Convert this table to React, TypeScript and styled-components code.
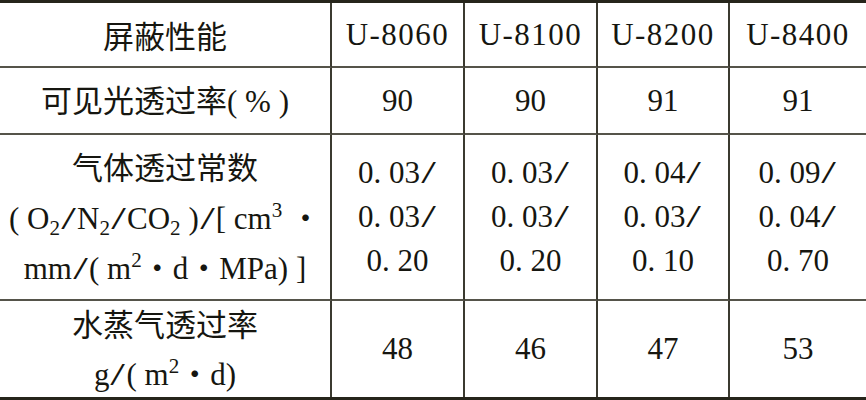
import React from 'react';
import styled, { createGlobalStyle } from 'styled-components';

const GlobalStyle = createGlobalStyle`
  html, body {
    margin: 0;
    padding: 0;
    background: #ffffff;
  }
`;

const serif = `'Liberation Serif', 'Times New Roman', 'DejaVu Serif', 'Noto Sans CJK SC', serif`;

const Table = styled.div`
  width: 866px;
  display: grid;
  grid-template-columns: 332px 133px 133px 132px 1fr;
  grid-template-rows: 65px 67px 166px 96px;
  border-top: 3px solid #26251b;
  border-bottom: 3px solid #26251b;
  background: #fff;
  color: #161610;
  font-family: ${serif};
`;

const Cell = styled.div<{ $lastCol?: boolean; $lastRow?: boolean; $lh?: number }>`
  box-sizing: border-box;
  display: flex;
  flex-direction: column;
  align-items: center;
  justify-content: center;
  text-align: center;
  font-family: ${serif};
  font-size: 31px;
  line-height: ${p => p.$lh ?? 36}px;
  white-space: nowrap;
  border-right: ${p => (p.$lastCol ? 'none' : '2px solid #3b3a30')};
  border-bottom: ${p => (p.$lastRow ? 'none' : '2px solid #55544a')};
`;

const Cjk = styled.span`
  font-family: 'Noto Sans CJK SC', sans-serif;
  font-size: 31px;
  font-weight: 400;
`;

const Model = styled.span`
  letter-spacing: 1.5px;
`;

const Sub = styled.sub`
  font-size: 0.68em;
  vertical-align: -0.28em;
  line-height: 0;
`;

const Sup = styled.sup`
  font-size: 0.68em;
  vertical-align: 0.55em;
  line-height: 0;
`;

const Dot = styled.span`
  font-family: 'Noto Sans CJK SC', sans-serif;
`;

const Slash = styled.span`
  display: inline-block;
  width: 0.55em;
  text-align: center;
  transform: scaleX(1.7);
`;

const Num: React.FC<{ text: string }> = ({ text }) =>
  text.endsWith('/') ? (
    <>
      {text.slice(0, -1)}
      <Slash>/</Slash>
    </>
  ) : (
    <>{text}</>
  );

const models = ['U-8060', 'U-8100', 'U-8200', 'U-8400'];

type Row = {
  label: React.ReactNode[];
  labelLh?: number;
  valueLh?: number;
  values: string[][];
};

const rows: Row[] = [
  {
    label: [<><Cjk>可见光透过率</Cjk>( % )</>],
    values: [['90'], ['90'], ['91'], ['91']],
  },
  {
    label: [
      <Cjk>气体透过常数</Cjk>,
      <>( O<Sub>2</Sub><Slash>/</Slash>N<Sub>2</Sub><Slash>/</Slash>CO<Sub>2</Sub> )<Slash>/</Slash>[ cm<Sup>3</Sup> <Dot>・</Dot></>,
      <>mm<Slash>/</Slash>( m<Sup>2</Sup><Dot>・</Dot>d<Dot>・</Dot>MPa) ]</>,
    ],
    labelLh: 47,
    valueLh: 44,
    values: [
      ['0. 03/', '0. 03/', '0. 20'],
      ['0. 03/', '0. 03/', '0. 20'],
      ['0. 04/', '0. 03/', '0. 10'],
      ['0. 09/', '0. 04/', '0. 70'],
    ],
  },
  {
    label: [<Cjk>水蒸气透过率</Cjk>, <>g<Slash>/</Slash>( m<Sup>2</Sup><Dot>・</Dot>d)</>],
    labelLh: 46,
    values: [['48'], ['46'], ['47'], ['53']],
  },
];

const App: React.FC = () => {
  return (
    <>
      <GlobalStyle />
      <Table>
        <Cell>
          <Cjk>屏蔽性能</Cjk>
        </Cell>
        {models.map((m, i) => (
          <Cell key={m} $lastCol={i === models.length - 1}>
            <Model>{m}</Model>
          </Cell>
        ))}

        {rows.map((row, r) => {
          const lastRow = r === rows.length - 1;
          return (
            <React.Fragment key={r}>
              <Cell $lastRow={lastRow} $lh={row.labelLh}>
                {row.label.map((line, j) => (
                  <div key={j}>{line}</div>
                ))}
              </Cell>
              {row.values.map((lines, c) => (
                <Cell key={c} $lastRow={lastRow} $lastCol={c === row.values.length - 1} $lh={row.valueLh}>
                  {lines.map((line, j) => (
                    <div key={j}>
                      <Num text={line} />
                    </div>
                  ))}
                </Cell>
              ))}
            </React.Fragment>
          );
        })}
      </Table>
    </>
  );
};

export default App;
